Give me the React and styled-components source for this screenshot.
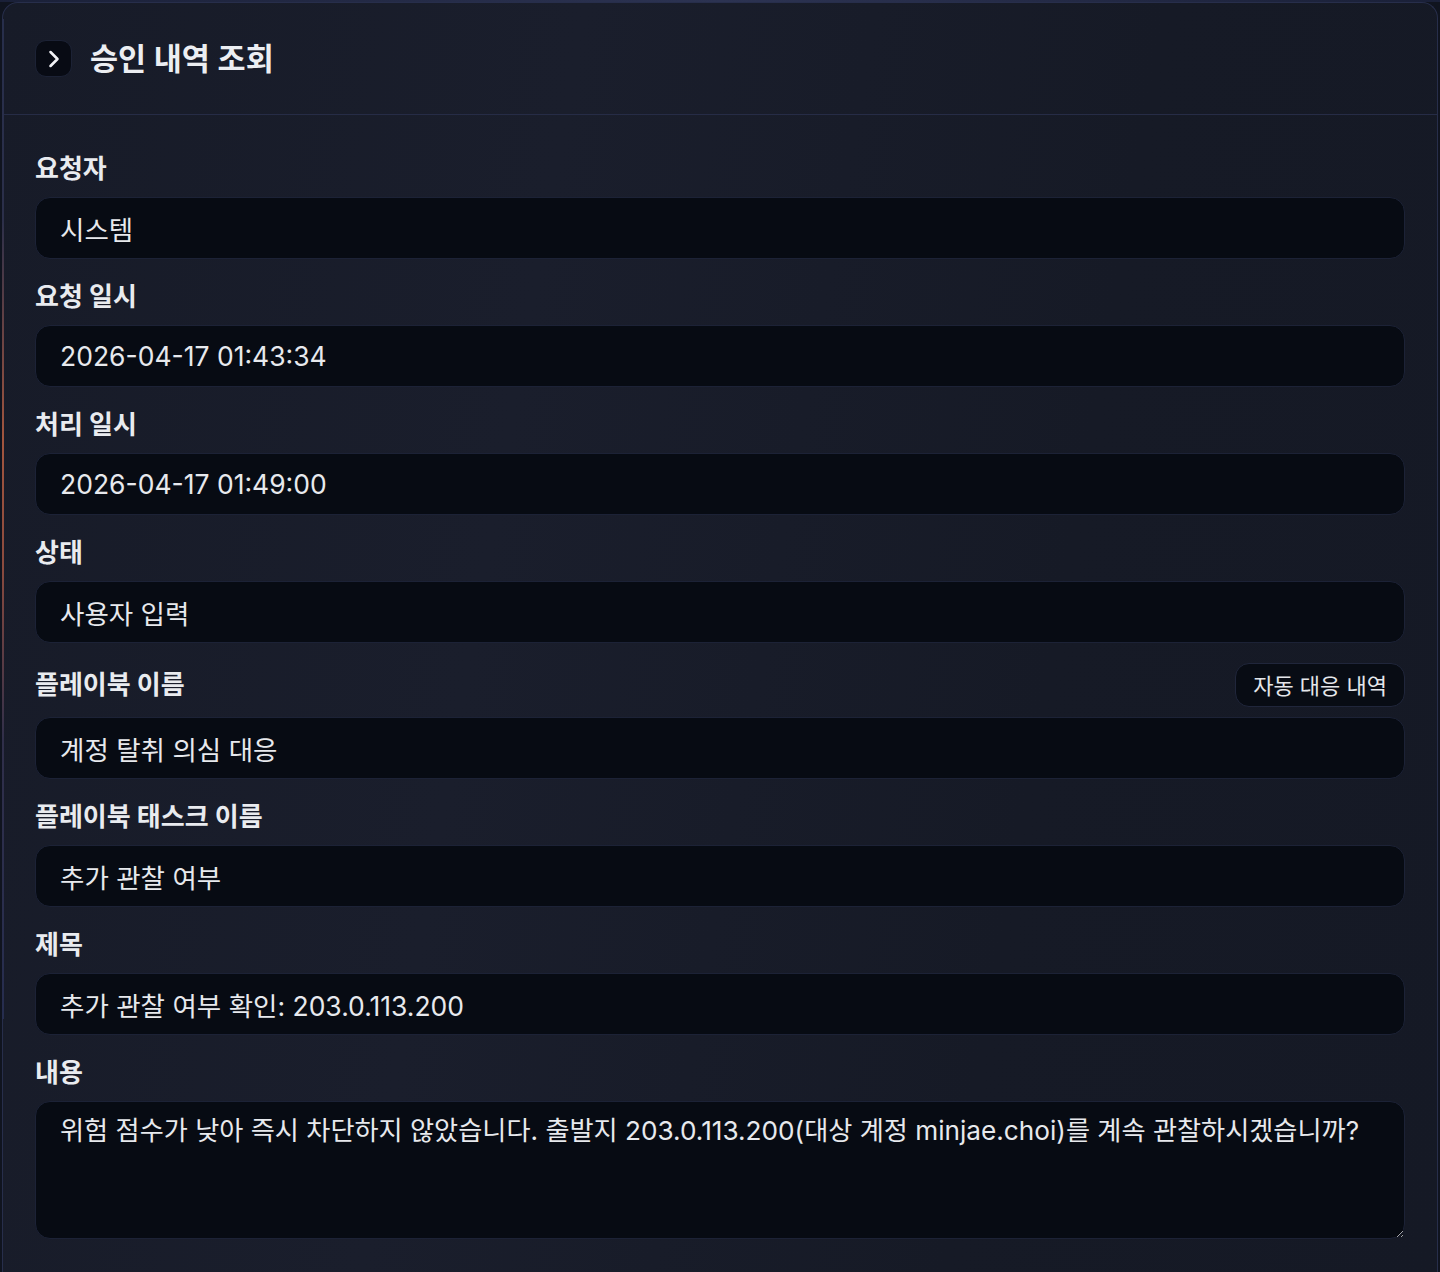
import React from "react"
import styled, { createGlobalStyle } from "styled-components"
import { ChevronRight } from "lucide-react"

const fields = [
  { label: "요청자", value: "시스템" },
  { label: "요청 일시", value: "2026-04-17 01:43:34" },
  { label: "처리 일시", value: "2026-04-17 01:49:00" },
  { label: "상태", value: "사용자 입력" },
  { label: "플레이북 이름", value: "계정 탈취 의심 대응", action: "자동 대응 내역" },
  { label: "플레이북 태스크 이름", value: "추가 관찰 여부" },
  { label: "제목", value: "추가 관찰 여부 확인: 203.0.113.200" },
]

const content =
  "위험 점수가 낮아 즉시 차단하지 않았습니다. 출발지 203.0.113.200(대상 계정 minjae.choi)를 계속 관찰하시겠습니까?"

const App = () => {
  return (
    <>
      <GlobalStyle />
      <StPage>
        <StPanel>
          <StHeader>
            <StToggle type="button">
              <ChevronRight size={28} strokeWidth={2.2} />
            </StToggle>
            <StTitle>승인 내역 조회</StTitle>
          </StHeader>

          <StBody>
            {fields.map((f) => (
              <StField key={f.label}>
                <StLabelRow>
                  <StLabel>{f.label}</StLabel>
                  {f.action && <StAction type="button">{f.action}</StAction>}
                </StLabelRow>
                <StInput readOnly value={f.value} />
              </StField>
            ))}
            <StField>
              <StLabelRow>
                <StLabel>내용</StLabel>
              </StLabelRow>
              <StTextArea readOnly value={content} />
            </StField>
          </StBody>
        </StPanel>
      </StPage>
    </>
  )
}

export default App

const GlobalStyle = createGlobalStyle`
  html, body {
    margin: 0;
    background: #10141f;
    color-scheme: dark;
  }
  * {
    box-sizing: border-box;
  }
  body {
    font-family: Inter, "Noto Sans CJK KR", "Noto Sans", sans-serif;
  }
`

const StPage = styled.div`
  min-height: 1272px;
  padding: 2px 2px 0 2px;
  background: linear-gradient(90deg, #1a2038 0%, #2c3352 50%, #1a2038 100%);
  background-size: 100% 2px;
  background-repeat: no-repeat;
  background-color: #10141f;
`

const StPanel = styled.div`
  position: relative;
  min-height: 1300px;
  border: 1px solid #272e4b;
  border-bottom: 0;
  border-radius: 16px 16px 0 0;
  background: linear-gradient(100deg, #171b28 0%, #1a1e2c 35%, #161a26 70%, #151925 100%);

  &::before {
    content: "";
    position: absolute;
    left: -1px;
    top: 16px;
    width: 2px;
    height: 1000px;
    background: linear-gradient(
      180deg,
      #272e4b 0%,
      #2b2f4a 20%,
      #a2553e 42%,
      #8a4a3e 55%,
      #302f4a 72%,
      #262d4f 100%
    );
  }
`

const StHeader = styled.div`
  display: flex;
  align-items: center;
  gap: 18px;
  height: 112px;
  padding: 0 32px;
  border-bottom: 1px solid #262c46;
`

const StToggle = styled.button`
  display: flex;
  align-items: center;
  justify-content: center;
  width: 37px;
  height: 37px;
  padding: 0;
  border: 1px solid #1c2235;
  border-radius: 11px;
  background: #080b14;
  color: #f2f3f6;
`

const StTitle = styled.h2`
  margin: 0 0 3px;
  font-size: 30.5px;
  font-weight: 600;
  color: #eceef2;
`

const StBody = styled.div`
  display: flex;
  flex-direction: column;
  gap: 20px;
  padding: 36px 32px 40px;
`

const StField = styled.div`
  display: flex;
  flex-direction: column;
  gap: 10px;
`

const StLabelRow = styled.div`
  display: flex;
  align-items: center;
  justify-content: space-between;
  min-height: 36px;
`

const StLabel = styled.label`
  font-size: 26px;
  font-weight: 700;
  line-height: 36px;
  color: #e9ebef;
`

const StAction = styled.button`
  height: 44px;
  padding: 0 17px 2px;
  border: 1px solid #20263b;
  border-radius: 14px;
  background: #080c14;
  color: #e4e6ea;
  font-family: inherit;
  font-size: 22px;
`

const StInput = styled.input`
  width: 100%;
  height: 62px;
  padding: 0 24px;
  border: 1px solid #1c2236;
  border-radius: 15px;
  background: #070b13;
  color: #e7e9ed;
  font-family: inherit;
  font-size: 26.5px;
  outline: none;
`

const StTextArea = styled.textarea`
  width: 100%;
  height: 138px;
  padding: 12px 24px;
  border: 1px solid #1c2236;
  border-radius: 15px;
  background: #070b13;
  color: #e7e9ed;
  font-family: inherit;
  font-size: 26.2px;
  line-height: 34px;
  outline: none;
  resize: vertical;
`
